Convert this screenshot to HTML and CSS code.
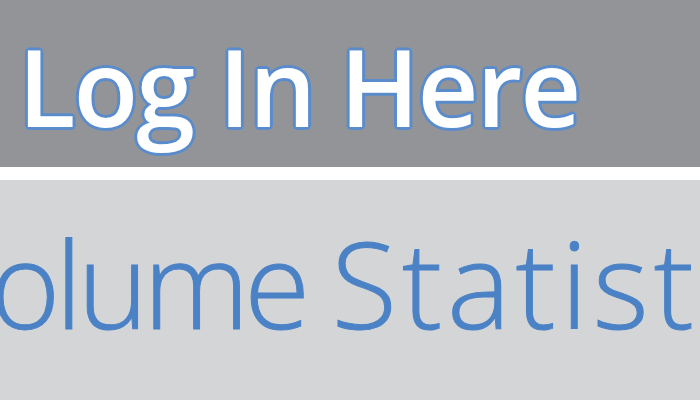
FILE: index.html
```html
<!DOCTYPE html>
<html>
<head>
<meta charset="utf-8">
<link rel="stylesheet" href="styles.css">
</head>
<body>
<div class="page">
  <header class="login-bar">
    <h1 class="login-title">Log In Here</h1>
  </header>
  <div class="divider"></div>
  <section class="stats">
    <h2 class="stats-title"><span class="stats-lead">olume</span> <span class="stats-word">Statist</span></h2>
  </section>
</div>
</body>
</html>
```
FILE: styles.css
```css
html, body {
  margin: 0;
  padding: 0;
  width: 700px;
  height: 400px;
  overflow: hidden;
  background: #d4d5d7;
}
.page {
  display: flex;
  flex-direction: column;
  width: 700px;
  height: 400px;
}
.login-bar {
  height: 167px;
  background: #939497;
  display: flex;
  align-items: flex-start;
  padding-left: 18px;
  box-sizing: border-box;
}
.login-title {
  margin: 0;
  margin-top: 21px;
  font-family: "Open Sans", sans-serif;
  font-weight: 600;
  font-size: 106px;
  line-height: 130px;
  letter-spacing: -2px;
  color: #ffffff;
  white-space: nowrap;
  text-shadow:
    3px 0 0 #5a8ccc, -3px 0 0 #5a8ccc, 0 3px 0 #5a8ccc, 0 -3px 0 #5a8ccc,
    2px 2px 0 #5a8ccc, -2px 2px 0 #5a8ccc, 2px -2px 0 #5a8ccc, -2px -2px 0 #5a8ccc;
}
.divider {
  height: 13px;
  background: #ffffff;
}
.stats {
  flex: 1;
  background: #d4d5d7;
  overflow: hidden;
}
.stats-title {
  margin: 0;
  margin-left: -10px;
  margin-top: 23px;
  font-family: "Open Sans", sans-serif;
  font-weight: 300;
  font-size: 120px;
  line-height: 160px;
  word-spacing: -5px;
  color: #4b82c6;
  -webkit-text-stroke: 1px #4b82c6;
  white-space: nowrap;
}
.stats-lead {
  letter-spacing: -5px;
}
.stats-word {
  letter-spacing: 5px;
}
```
